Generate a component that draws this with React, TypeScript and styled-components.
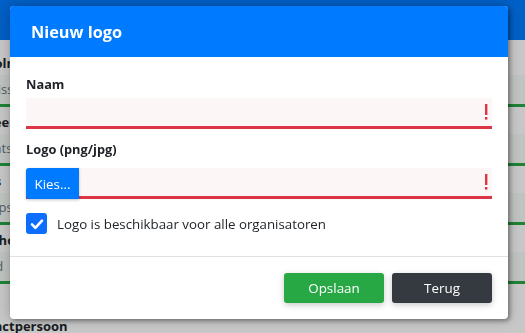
import React from "react";
import styled, { createGlobalStyle } from "styled-components";

const GlobalStyle = createGlobalStyle`
  html, body {
    margin: 0;
    padding: 0;
    width: 525px;
    height: 333px;
    overflow: hidden;
    background: #fff;
    font-family: "Open Sans", "Noto Sans", sans-serif;
    color: #212529;
  }
  * {
    box-sizing: border-box;
  }
`;

/* page behind the dialog, scrolled a little to the right */

const Page = styled.div`
  height: 333px;
  overflow: hidden;
  display: flex;
  flex-direction: column;
`;

const NavBar = styled.div`
  height: 40px;
  flex: none;
  background: #007bff;
`;

const PageForm = styled.div`
  display: flex;
  flex-direction: column;
  margin-left: -36px;
  padding-top: 13px;
`;

const PageLabel = styled.div<{ $gap?: number }>`
  flex: none;
  font-weight: 700;
  font-size: 13px;
  line-height: 20px;
  margin-top: ${(p) => p.$gap ?? 0}px;
`;

const PageInput = styled.div`
  flex: none;
  height: 32px;
  margin-top: 2px;
  padding: 0 12px;
  background: #f6fbf7;
  border-bottom: 3px solid #28a745;
  color: #6c757d;
  font-size: 13px;
  line-height: 29px;
  width: 620px;
`;

const Overlay = styled.div`
  position: fixed;
  inset: 0;
  background: rgba(0, 0, 0, 0.22);
`;

/* dialog */

const Dialog = styled.div`
  position: fixed;
  left: 10px;
  top: 6px;
  width: 498px;
  height: 313px;
  background: #fff;
  border-radius: 4px;
  overflow: hidden;
  box-shadow: 2px 2px 4px rgba(0, 0, 0, 0.35), 0 0 14px rgba(0, 0, 0, 0.25);
  display: flex;
  flex-direction: column;
`;

const Header = styled.div`
  height: 51px;
  flex: none;
  background: #007bff;
  display: flex;
  align-items: center;
  padding: 0 21px;
`;

const Title = styled.h5`
  margin: 0;
  color: #fff;
  font-size: 16.3px;
  font-weight: 700;
  line-height: 24px;
`;

const Body = styled.div`
  flex: 1;
  display: flex;
  flex-direction: column;
  padding: 17px 16px 0;
`;

const Label = styled.label<{ $top?: number }>`
  font-size: 12.8px;
  font-weight: 700;
  line-height: 20px;
  color: #212529;
  margin-top: ${(p) => p.$top ?? 0}px;
`;

const InvalidField = styled.div<{ $top: number }>`
  margin-top: ${(p) => p.$top}px;
  height: 31px;
  background: #fcf6f6;
  border-bottom: 3px solid #dc3545;
  display: flex;
  align-items: stretch;
`;

const FieldFill = styled.div`
  flex: 1;
  display: flex;
  align-items: center;
  justify-content: flex-end;
  padding-right: 4px;
`;

const PickButton = styled.div`
  width: 53px;
  margin-bottom: -3px;
  background: #007bff;
  color: #fff;
  font-size: 13.3px;
  display: flex;
  align-items: center;
  justify-content: center;
  border-radius: 3px 0 0 3px;
  box-shadow: 0 1px 3px rgba(0, 0, 0, 0.25);
`;

const CheckRow = styled.label`
  margin-top: 14px;
  display: flex;
  align-items: center;
  gap: 10px;
  font-size: 13.3px;
  color: #212529;
`;

const CheckBox = styled.span`
  width: 21px;
  height: 21px;
  border-radius: 3px;
  background: #0d6efd;
  display: flex;
  align-items: center;
  justify-content: center;
`;

const Footer = styled.div`
  flex: none;
  border-top: 1px solid #dee2e6;
  padding: 16px;
  display: flex;
  justify-content: flex-end;
  gap: 8px;
`;

const Button = styled.button<{ $variant: "save" | "back" }>`
  width: 100px;
  height: 30px;
  border: none;
  border-radius: 3px;
  font-family: inherit;
  font-size: 13.4px;
  color: #fff;
  background: ${(p) => (p.$variant === "save" ? "#28a745" : "#343a40")};
  box-shadow: 0 2px 6px rgba(0, 0, 0, 0.22);
  cursor: pointer;
`;

const Bang = () => (
  <svg width="4" height="16" viewBox="0 0 4 16">
    <rect x="1" y="0" width="2.4" height="11" fill="#dc3545" />
    <rect x="1" y="13" width="2.4" height="2.6" fill="#dc3545" />
  </svg>
);

const Check = () => (
  <svg width="14" height="14" viewBox="0 0 14 14">
    <path
      d="M2 7.4 L5.4 10.8 L12 3.6"
      fill="none"
      stroke="#fff"
      strokeWidth="2.6"
      strokeLinecap="round"
      strokeLinejoin="round"
    />
  </svg>
);

export default function App() {
  return (
    <>
      <GlobalStyle />
      <Page>
        <NavBar />
        <PageForm>
          <PageLabel>Schoolnaam</PageLabel>
          <PageInput>Basisschool</PageInput>
          <PageLabel $gap={5}>Gemeente</PageLabel>
          <PageInput>Plaatsnaam</PageInput>
          <PageLabel $gap={5}>Adres</PageLabel>
          <PageInput>Dorpsplein 1</PageInput>
          <PageLabel $gap={5}>Schiphol</PageLabel>
          <PageInput>Kind</PageInput>
          <PageLabel $gap={32}>Contactpersoon</PageLabel>
        </PageForm>
      </Page>
      <Overlay />
      <Dialog>
        <Header>
          <Title>Nieuw logo</Title>
        </Header>
        <Body>
          <Label>Naam</Label>
          <InvalidField $top={4}>
            <FieldFill>
              <Bang />
            </FieldFill>
          </InvalidField>
          <Label $top={10}>Logo (png/jpg)</Label>
          <InvalidField $top={9}>
            <PickButton>Kies...</PickButton>
            <FieldFill>
              <Bang />
            </FieldFill>
          </InvalidField>
          <CheckRow>
            <CheckBox>
              <Check />
            </CheckBox>
            Logo is beschikbaar voor alle organisatoren
          </CheckRow>
        </Body>
        <Footer>
          <Button $variant="save">Opslaan</Button>
          <Button $variant="back">Terug</Button>
        </Footer>
      </Dialog>
    </>
  );
}
